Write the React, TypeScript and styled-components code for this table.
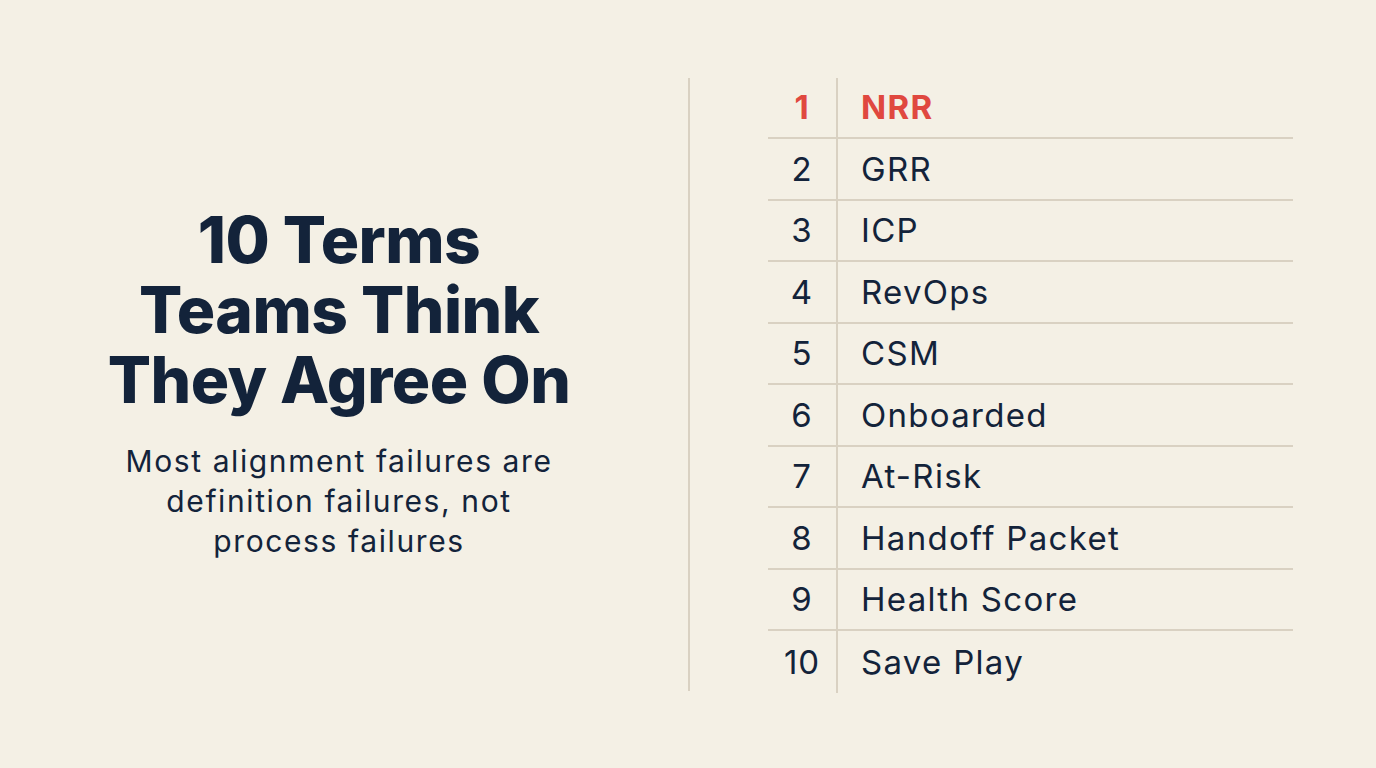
import React from "react";
import styled, { createGlobalStyle } from "styled-components";

const Global = createGlobalStyle`
  html, body { margin: 0; padding: 0; background: #f4f0e5; }
  body { font-family: Inter, "Noto Sans", sans-serif; }
`;

const Page = styled.div`
  width: 1376px;
  height: 768px;
  display: grid;
  grid-template-columns: 688px 2px 1fr;
  align-items: center;
  background: #f4f0e5;
  color: #13233a;
`;

const Left = styled.div`
  display: flex;
  flex-direction: column;
  align-items: center;
  text-align: center;
  padding-right: 10px;
  margin-top: -2px;
`;

const Title = styled.h1`
  margin: 0;
  font-family: Inter, sans-serif;
  font-weight: 800;
  font-size: 64px;
  line-height: 70px;
  letter-spacing: -0.5px;
  color: #13233a;
`;

const Sub = styled.p`
  margin: 26px 0 0;
  font-family: Inter, sans-serif;
  font-weight: 400;
  font-size: 30px;
  line-height: 40px;
  letter-spacing: 1.6px;
  width: 440px;
  color: #13233a;
`;

const Divider = styled.div`
  width: 2px;
  height: 613px;
  background: #d9d1c2;
  align-self: center;
`;

const Table = styled.div`
  margin-left: 78px;
  width: 525px;
  display: flex;
  flex-direction: column;
  align-self: center;
  margin-top: 2px;
`;

const Row = styled.div<{ $last?: boolean }>`
  display: grid;
  grid-template-columns: 70px 1fr;
  height: 61.5px;
  border-bottom: ${(p) => (p.$last ? "none" : "2px solid #d9d1c2")};
  box-sizing: border-box;
`;

const Num = styled.div<{ $hl?: boolean }>`
  display: flex;
  align-items: center;
  justify-content: center;
  border-right: 2px solid #d9d1c2;
  font-size: 33px;
  letter-spacing: 1px;
  font-weight: ${(p) => (p.$hl ? 700 : 400)};
  color: ${(p) => (p.$hl ? "#e0483f" : "#13233a")};
`;

const Term = styled.div<{ $hl?: boolean }>`
  display: flex;
  align-items: center;
  padding-left: 23px;
  font-size: 33px;
  letter-spacing: 1.3px;
  font-weight: ${(p) => (p.$hl ? 700 : 400)};
  color: ${(p) => (p.$hl ? "#e0483f" : "#13233a")};
`;

const terms = [
  "NRR",
  "GRR",
  "ICP",
  "RevOps",
  "CSM",
  "Onboarded",
  "At-Risk",
  "Handoff Packet",
  "Health Score",
  "Save Play",
];

export default function App() {
  return (
    <>
      <Global />
      <Page>
        <Left>
          <Title>
            10 Terms
            <br />
            Teams Think
            <br />
            They Agree On
          </Title>
          <Sub>Most alignment failures are definition failures, not process failures</Sub>
        </Left>
        <Divider />
        <Table>
          {terms.map((t, i) => (
            <Row key={t} $last={i === terms.length - 1}>
              <Num $hl={i === 0}>{i + 1}</Num>
              <Term $hl={i === 0}>{t}</Term>
            </Row>
          ))}
        </Table>
      </Page>
    </>
  );
}
